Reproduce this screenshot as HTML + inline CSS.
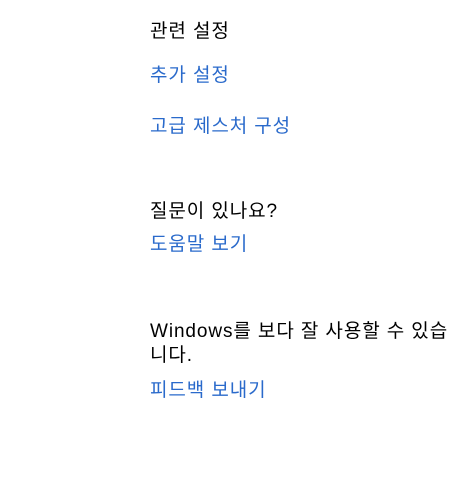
<!DOCTYPE html>
<html><head><meta charset="utf-8"><style>
body{margin:0;width:460px;height:488px;background:#fff;position:relative;overflow:hidden;font-family:"Liberation Sans","Noto Sans CJK KR",sans-serif;font-size:19px;letter-spacing:0.9px;}
div{position:absolute;left:150px;line-height:24px;white-space:nowrap;color:#000;}
.l{color:#2a6acb;}
</style></head><body>
<div style="top:20px">관련 설정</div>
<div class="l" style="top:64px">추가 설정</div>
<div class="l" style="top:115px">고급 제스처 구성</div>
<div style="top:200px">질문이 있나요?</div>
<div class="l" style="top:233px">도움말 보기</div>
<div style="top:320px">Windows를 보다 잘 사용할 수 있습<br>니다.</div>
<div class="l" style="top:379px">피드백 보내기</div>
</body></html>
